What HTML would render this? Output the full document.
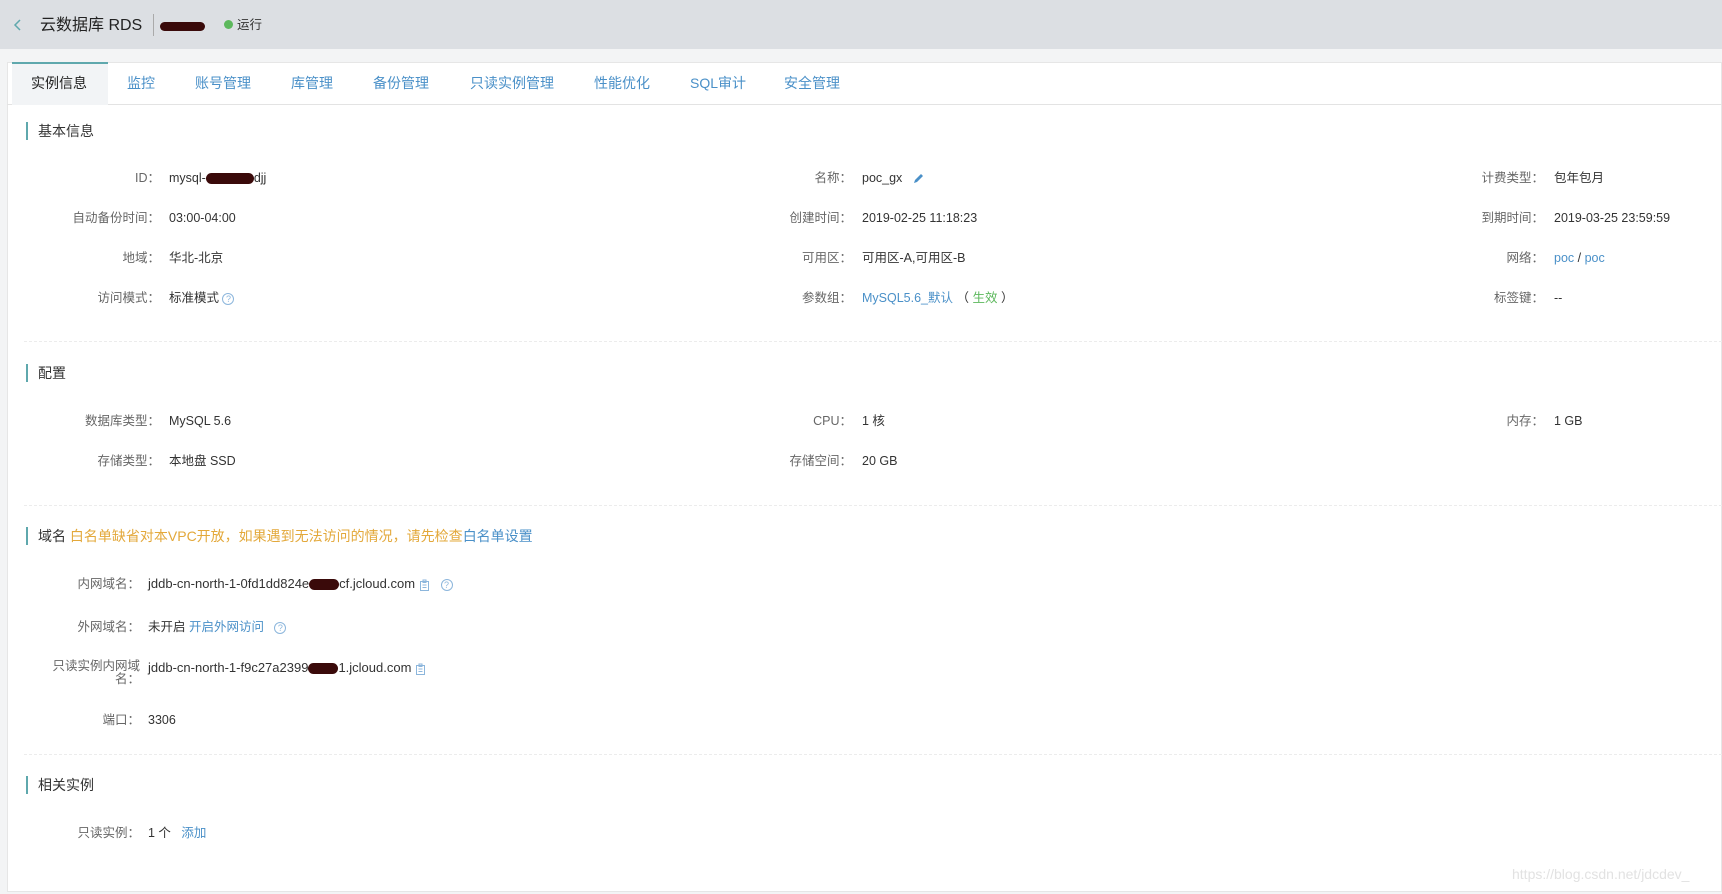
<!DOCTYPE html>
<html><head><meta charset="utf-8"><style>
*{margin:0;padding:0;box-sizing:border-box}
body{width:1722px;height:894px;background:#fff;font-family:"Liberation Sans","Noto Sans CJK SC",sans-serif;font-size:12.5px;color:#333;position:relative;overflow:hidden}
.a{position:absolute;white-space:nowrap;line-height:16px}
.l{position:absolute;white-space:nowrap;text-align:right;color:#666;line-height:16px}
.blue{color:#4a90c8}
.sec{position:absolute;left:26px;font-size:14px;color:#333;border-left:2px solid #5fa8ad;padding-left:10px;line-height:18px}
.div{position:absolute;left:24px;right:0;border-top:1px dashed #ececec}
.q{display:inline-block;width:12px;height:12px;border:1px solid #8cb6dc;border-radius:50%;color:#8cb6dc;font-size:9px;line-height:10px;text-align:center;vertical-align:middle}
.cp{display:inline-block;width:11px;height:12px;vertical-align:middle}
.red{display:inline-block;background:#3a0a0a;border-radius:6px;vertical-align:middle}
</style></head><body>
<div class="a" style="left:0;top:0;width:1722px;height:49px;background:#dcdfe3"></div>
<svg class="a" style="left:13px;top:18px" width="10" height="14" viewBox="0 0 10 14"><path d="M7 2 L2 7 L7 12" fill="none" stroke="#5fa8ad" stroke-width="1.5"/></svg>
<div class="a" style="left:40px;top:16px;font-size:16px;line-height:20px;color:#222">云数据库 RDS</div>
<div class="a" style="left:153px;top:14px;width:1px;height:22px;background:#aaa"></div>
<div class="a" style="left:160px;top:22px;width:45px;height:9px;background:#3a0a0a;border-radius:5px"></div>
<div class="a" style="left:224px;top:20px;width:9px;height:9px;border-radius:50%;background:#5cb85c"></div>
<div class="a" style="left:237px;top:17px;font-size:12.5px;color:#333">运行</div>
<div class="a" style="left:0;top:49px;width:1722px;height:845px;background:#f3f4f5"></div>
<div class="a" style="left:7px;top:62px;width:1715px;height:830px;background:#fff;border:1px solid #e6e6e6"></div>
<div class="a" style="left:7px;top:104px;width:1715px;border-top:1px solid #e3e3e3"></div>
<div class="a" style="left:12px;top:62px;width:96px;height:43px;background:#f2f4f6;border-top:2px solid #5fa8ad"></div>
<div class="a" style="left:31px;top:75px;font-size:14px;color:#222">实例信息</div>
<div class="a blue" style="left:127px;top:75px;font-size:14px">监控</div>
<div class="a blue" style="left:195px;top:75px;font-size:14px">账号管理</div>
<div class="a blue" style="left:291px;top:75px;font-size:14px">库管理</div>
<div class="a blue" style="left:373px;top:75px;font-size:14px">备份管理</div>
<div class="a blue" style="left:470px;top:75px;font-size:14px">只读实例管理</div>
<div class="a blue" style="left:594px;top:75px;font-size:14px">性能优化</div>
<div class="a blue" style="left:690px;top:75px;font-size:14px">SQL审计</div>
<div class="a blue" style="left:784px;top:75px;font-size:14px">安全管理</div>

<div class="sec" style="top:122px">基本信息</div>
<div class="l" style="right:1562px;top:170px">ID：</div><div class="a" style="left:169px;top:170px">mysql-<span class="red" style="width:48px;height:11px"></span>djj</div>
<div class="l" style="right:1562px;top:210px">自动备份时间：</div><div class="a" style="left:169px;top:210px">03:00-04:00</div>
<div class="l" style="right:1562px;top:250px">地域：</div><div class="a" style="left:169px;top:250px">华北-北京</div>
<div class="l" style="right:1562px;top:290px">访问模式：</div><div class="a" style="left:169px;top:290px">标准模式 <span class="q">?</span></div>
<div class="l" style="right:870px;top:170px">名称：</div><div class="a" style="left:862px;top:170px">poc_gx <svg width="12" height="12" viewBox="0 0 12 12" style="vertical-align:middle;margin-left:6px"><path d="M2 10 L3 7 L9 1 L11 3 L5 9 Z" fill="#4a90c8"/></svg></div>
<div class="l" style="right:870px;top:210px">创建时间：</div><div class="a" style="left:862px;top:210px">2019-02-25 11:18:23</div>
<div class="l" style="right:870px;top:250px">可用区：</div><div class="a" style="left:862px;top:250px">可用区-A,可用区-B</div>
<div class="l" style="right:870px;top:290px">参数组：</div><div class="a" style="left:862px;top:290px"><span class="blue">MySQL5.6_默认</span> （ <span style="color:#5cb85c">生效</span> ）</div>
<div class="l" style="right:178px;top:170px">计费类型：</div><div class="a" style="left:1554px;top:170px">包年包月</div>
<div class="l" style="right:178px;top:210px">到期时间：</div><div class="a" style="left:1554px;top:210px">2019-03-25 23:59:59</div>
<div class="l" style="right:178px;top:250px">网络：</div><div class="a" style="left:1554px;top:250px"><span class="blue">poc</span> / <span class="blue">poc</span></div>
<div class="l" style="right:178px;top:290px">标签键：</div><div class="a" style="left:1554px;top:290px">--</div>
<div class="div" style="top:341px"></div>

<div class="sec" style="top:364px">配置</div>
<div class="l" style="right:1562px;top:413px">数据库类型：</div><div class="a" style="left:169px;top:413px">MySQL 5.6</div>
<div class="l" style="right:1562px;top:453px">存储类型：</div><div class="a" style="left:169px;top:453px">本地盘 SSD</div>
<div class="l" style="right:870px;top:413px">CPU：</div><div class="a" style="left:862px;top:413px">1 核</div>
<div class="l" style="right:870px;top:453px">存储空间：</div><div class="a" style="left:862px;top:453px">20 GB</div>
<div class="l" style="right:178px;top:413px">内存：</div><div class="a" style="left:1554px;top:413px">1 GB</div>
<div class="div" style="top:505px"></div>

<div class="sec" style="top:527px">域名 <span style="color:#e3a83a">白名单缺省对本VPC开放，如果遇到无法访问的情况，请先检查</span><span class="blue">白名单设置</span></div>
<div class="l" style="right:1582px;top:576px">内网域名：</div><div class="a" style="left:148px;top:576px;font-size:13px">jddb-cn-north-1-0fd1dd824e<span class="red" style="width:30px;height:11px"></span>cf.jcloud.com <svg class="cp" viewBox="0 0 11 12"><path d="M1.5 2.5 H9.5 V11.5 H1.5 Z M4 1 H7 V3.5 H4 Z M3.5 6 H7.5 M3.5 8.5 H7.5" fill="none" stroke="#8cb6dc"/></svg> &nbsp; <span class="q">?</span></div>
<div class="l" style="right:1582px;top:619px">外网域名：</div><div class="a" style="left:148px;top:619px">未开启 <span class="blue">开启外网访问</span> &nbsp; <span class="q">?</span></div>
<div class="l" style="right:1582px;top:660px;line-height:13px">只读实例内网域<br>名：</div><div class="a" style="left:148px;top:660px;font-size:13px">jddb-cn-north-1-f9c27a2399<span class="red" style="width:30px;height:11px"></span>1.jcloud.com <svg class="cp" viewBox="0 0 11 12"><path d="M1.5 2.5 H9.5 V11.5 H1.5 Z M4 1 H7 V3.5 H4 Z M3.5 6 H7.5 M3.5 8.5 H7.5" fill="none" stroke="#8cb6dc"/></svg></div>
<div class="l" style="right:1582px;top:712px">端口：</div><div class="a" style="left:148px;top:712px">3306</div>
<div class="div" style="top:754px"></div>

<div class="sec" style="top:776px">相关实例</div>
<div class="l" style="right:1582px;top:825px">只读实例：</div><div class="a" style="left:148px;top:825px">1 个 &nbsp; <span class="blue">添加</span></div>
<div class="a" style="left:1512px;top:866px;font-size:14px;color:#e2e2e2">https://blog.csdn.net/jdcdev_</div>
</body></html>
